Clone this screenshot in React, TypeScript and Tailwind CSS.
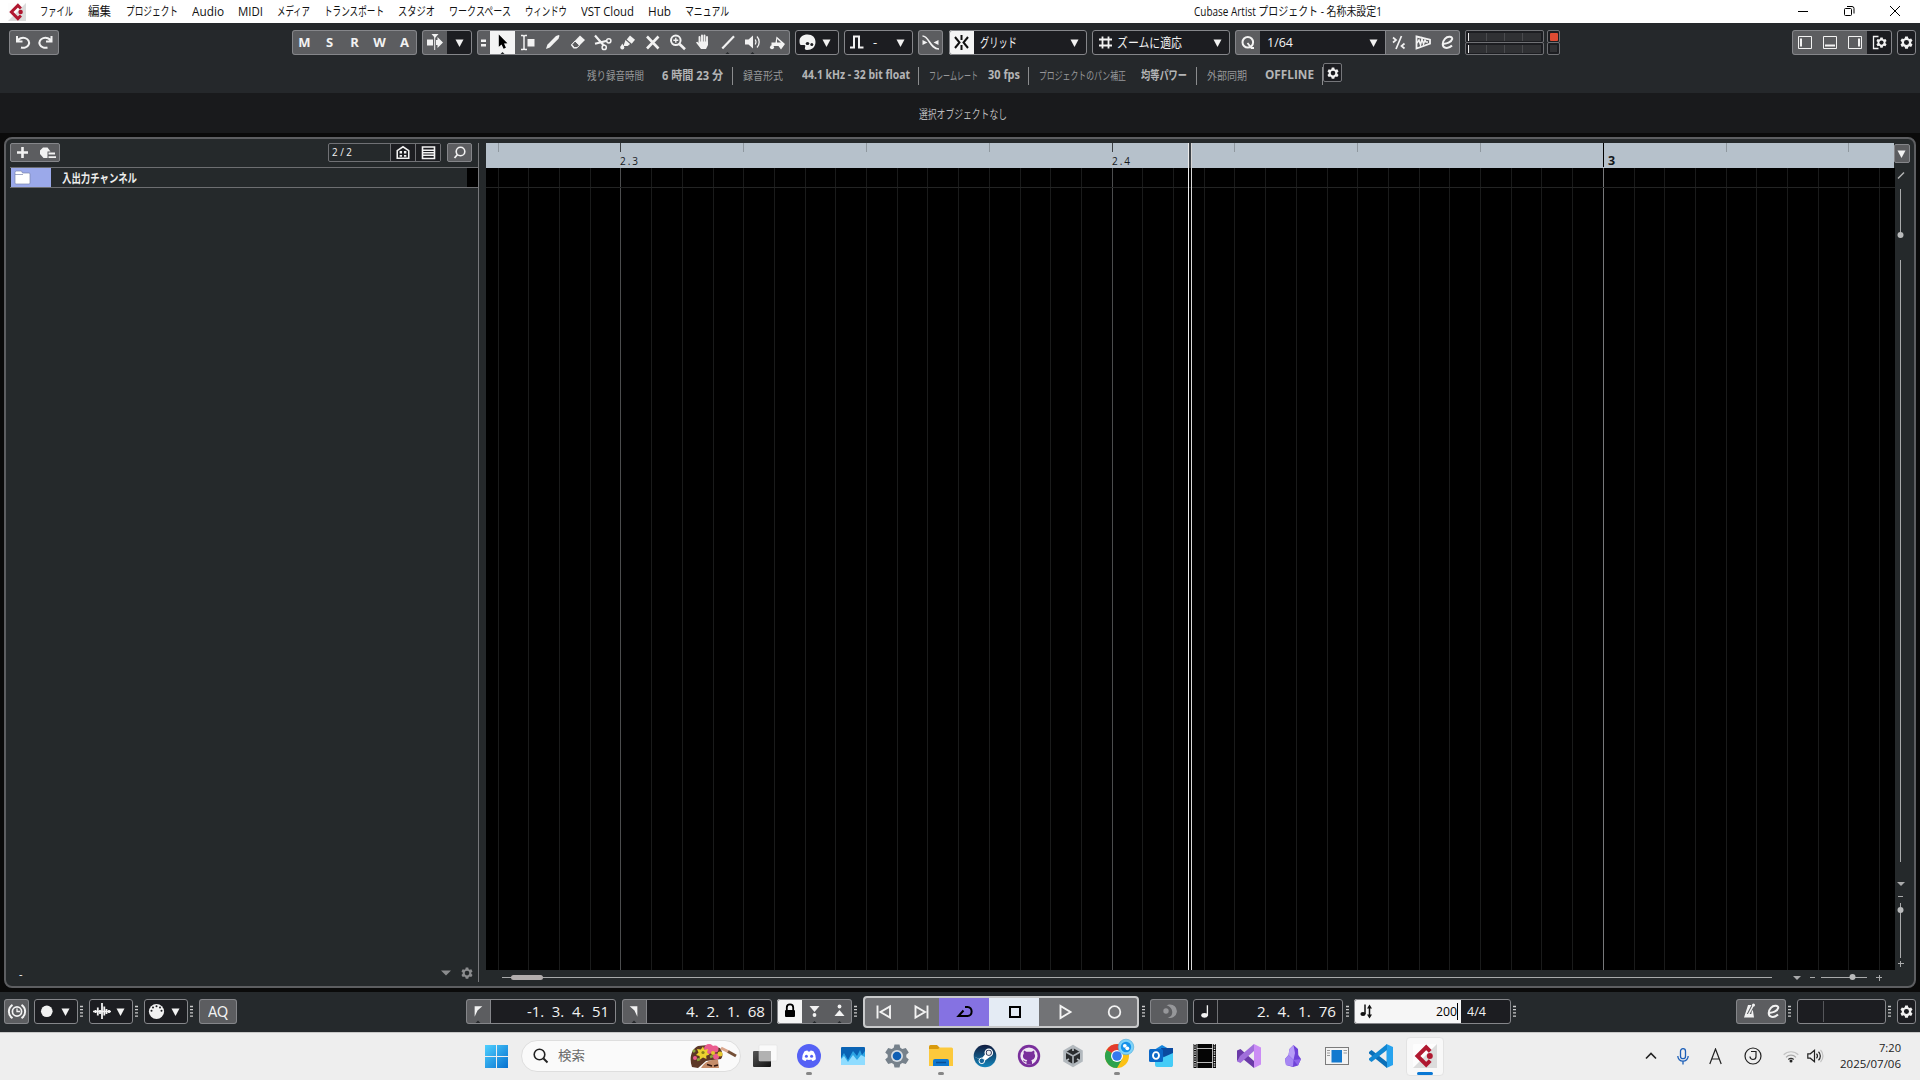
import { useLayoutEffect, useRef } from 'react';
import type { ReactNode } from 'react';

/** Text squeezed or stretched horizontally to the width of its box. */
function Fit({ children, className = '' }: { children: ReactNode; className?: string }) {
  const outer = useRef<HTMLSpanElement>(null);
  const inner = useRef<HTMLSpanElement>(null);
  useLayoutEffect(() => {
    if (outer.current && inner.current) {
      inner.current.style.transform = 'none';
      const natural = inner.current.getBoundingClientRect().width;
      inner.current.style.transform = `scaleX(${outer.current.clientWidth / natural})`;
    }
  }, []);
  return (
    <span ref={outer} className={`block shrink-0 whitespace-nowrap ${className}`}>
      <span ref={inner} className="inline-block origin-left">{children}</span>
    </span>
  );
}

function Icon({ children, w = 25, h = 25, className = '' }: { children: ReactNode; w?: number; h?: number; className?: string }) {
  return (
    <svg width={w} height={h} viewBox={`0 0 ${w} ${h}`} className={`block shrink-0 ${className}`} fill="none" stroke="none">
      {children}
    </svg>
  );
}

function Group({ children, className = '' }: { children?: ReactNode; className?: string }) {
  return (
    <div className={`flex h-[25px] shrink-0 items-center overflow-hidden rounded-[3px] outline outline-1 -outline-offset-1 outline-[#85868a] ${className}`}>
      {children}
    </div>
  );
}

const W = '#f2f2f2';
const GREY = 'bg-[#5c5d60]';
const DARK = 'bg-[#1c1d21]';

function Down({ className = '' }: { className?: string }) {
  return (
    <Icon w={9} h={8} className={className}>
      <path d="M0.5 0.5h8l-4 7.5z" fill={W} />
    </Icon>
  );
}

function Gear({ size, color, hole }: { size: number; color: string; hole: string }) {
  return (
    <svg width={size} height={size} viewBox="0 0 24 24" className="block shrink-0">
      <path d="M9.5 1h5l.8 3.300 2 1.200 3.300-1 2.500 4.300-2.500 2.300v2.400l2.500 2.300-2.500 4.300-3.300-1-2 1.200-.8 3.300h-5l-.8-3.300-2-1.200-3.300 1L.9 15.800l2.500-2.300v-2.400L.9 8.800l2.500-4.300 3.300 1 2-1.200z" fill={color} />
      <circle cx="12" cy="12.200" r="4.600" fill={hole} />
    </svg>
  );
}

function Dots() {
  return (
    <Icon w={4} h={13}>
      <path d="M0 1.500h3M0 4.700h3M0 7.900h3M0 11.100h3" stroke="#c9c9c9" strokeWidth="1.300" />
    </Icon>
  );
}

const menus: [string, string][] = [
  ['ファイル', 'w-[33px] mr-[15px]'],
  ['編集', 'w-[23px] mr-[15px]'],
  ['プロジェクト', 'w-[52px] mr-[14px]'],
  ['Audio', 'w-[32px] mr-[14px]'],
  ['MIDI', 'w-[25px] mr-[14px]'],
  ['メディア', 'w-[33px] mr-[14px]'],
  ['トランスポート', 'w-[60px] mr-[14px]'],
  ['スタジオ', 'w-[37px] mr-[14px]'],
  ['ワークスペース', 'w-[62px] mr-[14px]'],
  ['ウィンドウ', 'w-[42px] mr-[14px]'],
  ['VST Cloud', 'w-[53px] mr-[14px]'],
  ['Hub', 'w-[23px] mr-[14px]'],
  ['マニュアル', 'w-[44px]'],
];

function CubaseLogo({ size }: { size: number }) {
  return (
    <svg width={size} height={size} viewBox="0 0 24 24" className="block shrink-0">
      <rect width="24" height="24" rx="1" fill="#fdfdfd" />
      <path d="M24 0v24H0z" fill="#dcdcdc" />
      <path d="M17.200 7.300l-4-4L4.500 12l8.700 8.700 4-4" fill="none" stroke="#b01830" strokeWidth="4" />
      <circle cx="16.800" cy="12" r="3" fill="#b01830" />
    </svg>
  );
}

function MenuBar() {
  return (
    <header className="flex h-[23px] shrink-0 items-center bg-white text-[#111]">
      <div className="ml-[8px] mr-[14px] mt-[1px]"><CubaseLogo size={18} /></div>
      <nav className="flex text-[12px] leading-[20px]">
        {menus.map(([t, c]) => <Fit key={t} className={c}>{t}</Fit>)}
      </nav>
      <Fit className="ml-[465px] w-[188px] text-[12px] leading-[20px]">Cubase Artist プロジェクト - 名称未設定1</Fit>
      <div className="ml-auto mr-[19px] flex items-center gap-[34px] pb-[2px] text-black">
        <Icon w={12} h={12}><path d="M1 6.500h10" stroke="#000" /></Icon>
        <Icon w={12} h={12}><path d="M1.500 4.500a1 1 0 011-1h5a1 1 0 011 1v5a1 1 0 01-1 1h-5a1 1 0 01-1-1zM4 1.500h5a2 2 0 012 2v5" stroke="#000" /></Icon>
        <Icon w={12} h={12}><path d="M1 1l10 10M11 1L1 11" stroke="#000" /></Icon>
      </div>
    </header>
  );
}

const notch = <path d="M9.500 25l3-3 3 3z" fill="#25282b" />;

const tools: ReactNode[] = [
  <><path d="M8.800 4.500v12.300l2.800-2.300 2 4.200 2.300-1-1.900-4.200 3.400-.3z" fill="#000" />{notch}</>,
  <><path d="M6 5.500h2l1 1 1-1h2M6 19.500h2l1-1 1 1h2M9 6v13" stroke={W} strokeWidth="1.500" /><rect x="12.500" y="9" width="7" height="7.500" fill={W} /></>,
  <path d="M6 19l1.300-4.200L16 6l2.900-1 .6.800-1 3L9.800 17.600z" fill={W} />,
  <><path d="M15 5.500l5 4.500-8.500 8.500h-3L5.800 15z" fill={W} /><path d="M10 11l4.500 4.300-2.400 2.300h-3L7 14.500z" fill="#5c5d60" stroke={W} /></>,
  <><path d="M5 5.500l7 8M5 13.800l12-3M12 13.500l2 2" stroke={W} strokeWidth="2.200" /><circle cx="18.800" cy="10.800" r="2.100" stroke={W} strokeWidth="1.500" /><circle cx="14.200" cy="17.400" r="2.100" stroke={W} strokeWidth="1.500" /></>,
  <><path d="M15 5.500l5 4.200-3.300 4-5-4.200z" fill={W} /><path d="M10.500 10l4.600 4-2.400 1.900-4.300.2z" fill={W} /><circle cx="7.300" cy="17.500" r="2" fill={W} /><path d="M7.300 13.500l1.800 3.500H5.500z" fill={W} /></>,
  <path d="M7 6.500l11.500 12M18.500 6.500L7 18.500" stroke={W} strokeWidth="2.600" />,
  <><circle cx="10.800" cy="10.300" r="4.800" stroke={W} strokeWidth="2" /><path d="M14.500 14l5.500 5.200" stroke={W} strokeWidth="2.600" /><path d="M8.300 10.300h5M10.800 7.800v5" stroke={W} strokeWidth="1.400" /></>,
  <><path d="M9.500 13V7M12 12V5.500M14.500 12V5.500M17 12.500V7" stroke={W} strokeWidth="1.900" strokeLinecap="round" /><path d="M8.600 11.500H18V15l-2 4h-5l-5-6.600 1.300-.7 1.900 1.800z" fill={W} /></>,
  <><path d="M7.300 18.500L19 6.300" stroke={W} strokeWidth="2.200" />{notch}</>,
  <><path d="M5 9.500h3.500l4.500-4v13l-4.500-4H5z" fill={W} /><path d="M15.300 9.500a5 5 0 010 5M17 6.500a8 8 0 010 11" stroke={W} strokeWidth="1.300" />{notch}</>,
  <><path d="M11.500 6.500l8.500 7.500-4 5.500-2.500-3.500H6.500v-3.500h4z" fill={W} /><path d="M12 9l4 3.500h-4z" fill="#5c5d60" /><circle cx="7" cy="17.200" r="2" fill={W} /></>,
];

const EIcon = <path d="M7.500 13.500c4 .7 9-1.600 9.700-4.500.6-2.600-4.500-3.300-7.300-.2-3 3.300-3 8.200.6 9 2.400.5 4.800-.6 6.500-2.300" stroke={W} strokeWidth="2" />;

function Toolbar() {
  return (
    <div className="flex h-[39px] shrink-0 items-start pt-[7px] text-[#f2f2f2]">
      <Group className={`ml-[9px] w-[50px] ${GREY}`}>
        <Icon><path d="M8 6v5.500h5.500M8.500 11A6 5 0 1112 17.500" stroke={W} strokeWidth="2" /></Icon>
        <Icon><path d="M17.500 6v5.500H12M17 11A6 5 0 1013.500 17.500" stroke={W} strokeWidth="2" /></Icon>
      </Group>
      <Group className={`ml-[233px] w-[125px] font-['Open_Sans'] text-[13px] font-bold ${GREY}`}>
        {['M', 'S', 'R', 'W', 'A'].map((c) => <span key={c} className="w-[25px] text-center">{c}</span>)}
      </Group>
      <Group className={`ml-[5px] w-[50px] ${DARK}`}>
        <Icon className={GREY}>
          <path d="M5 9.500h6v6H5zM14 10h1.500V7l5.500 5.500-5.500 5.500v-3H14zM9.500 4h7l-3.500 4z" fill={W} />
          <path d="M12.700 4v16" stroke={W} />
        </Icon>
        <Down className="ml-[8px]" />
      </Group>
      <Group className={`ml-[5px] w-[313px] ${GREY}`}>
        <Icon w={13}><path d="M4 9.500h5v2.500H4zM4 14h5v2.500H4z" fill={W} /></Icon>
        {tools.map((t, i) => <Icon key={i} className={i === 0 ? 'bg-[#f4f4f4]' : ''}>{t}</Icon>)}
      </Group>
      <Group className={`ml-[5px] w-[44px] ${DARK}`}>
        <Icon>
          <path d="M4.500 11C4.500 7 8 4.500 12.500 4.500c5 0 8 3 8 7.500 0 5-3.500 8-8.500 8-2 0-2.500-1-2-2.500s.5-2.500-.8-2.500H6c-1 0-1.500-1.500-1.500-4z" fill={W} />
          <ellipse cx="12.500" cy="13.500" rx="1.800" ry="1.600" fill="#1c1d21" />
          <ellipse cx="16.800" cy="14.500" rx="1.500" ry="1.500" fill="#1c1d21" />
        </Icon>
        <Down className="ml-[2px]" />
      </Group>
      <Group className={`ml-[5px] w-[69px] text-[13px] ${DARK}`}>
        <Icon><path d="M6 17.500h4v-11h5v11h4.500" stroke={W} strokeWidth="2" /></Icon>
        <span className="ml-[4px]">-</span>
        <Down className="ml-auto mr-[8px]" />
      </Group>
      <Group className={`ml-[5px] w-[25px] ${GREY}`}>
        <Icon><path d="M4.500 6c7 0 7 13 16.500 13" stroke={W} strokeWidth="1.600" /><path d="M4.500 10v5l5-2.500zM20.500 10v5l-5-2.500z" fill={W} /></Icon>
      </Group>
      <Group className={`ml-[6px] w-[138px] ${DARK}`}>
        <Icon className="bg-[#f4f4f4]">
          <path d="M12.500 5v5M12.500 15v5M6 7l4.500 5.500L6 18M19 7l-4.500 5.500L19 18" stroke="#111" strokeWidth="2" />
        </Icon>
        <Fit className="ml-[6px] w-[37px] text-[13px]">グリッド</Fit>
        <Down className="ml-auto mr-[8px]" />
      </Group>
      <Group className={`ml-[5px] w-[138px] ${DARK}`}>
        <Icon><path d="M7 9.500h13M7 15.500h13M10.500 6.500v12M16.500 6.500v12" stroke={W} strokeWidth="1.800" /></Icon>
        <Fit className="w-[65px] text-[13px]">ズームに適応</Fit>
        <Down className="ml-auto mr-[8px]" />
      </Group>
      <Group className={`ml-[5px] w-[225px] ${DARK}`}>
        <Icon className={GREY}><circle cx="12.800" cy="12.300" r="5.300" stroke={W} strokeWidth="2" /><path d="M12.500 13l4 5h2.500" stroke={W} strokeWidth="1.800" /></Icon>
        <Fit className="ml-[7px] w-[26px] text-[13px]">1/64</Fit>
        <Down className="ml-auto mr-[7px]" />
        <div className={`flex border-l border-[#85868a] ${GREY}`}>
          <Icon w={24}><path d="M15.500 6L10 19M7 7.500l3 2.500-3 2.500M18.500 13.500l-3 2.500 3 2.500" stroke={W} strokeWidth="1.700" /></Icon>
          <Icon><path d="M6.500 6.500l13.500 3.200v4L6.500 18.500z" fill="#5c5d60" stroke={W} strokeWidth="1.800" /><path d="M7 13l2-3 1.500 5 1.500-6 1.500 5 1.500-4 1 2h2" stroke={W} strokeWidth="1.500" /></Icon>
          <Icon>{EIcon}</Icon>
        </div>
      </Group>
      <div className="ml-[5px] flex h-[25px] w-[79px] flex-col">
        {[0, 1].map((i) => (
          <div key={i} className="flex h-[13px] items-center rounded-[2px] border border-[#707175] bg-[#1c1d21] px-[2px] not-first:-mt-[1px]">
            <div className="h-[8px] w-[1px] bg-[#eee]" />
            <div className="grid h-[8px] grow grid-cols-4 divide-x divide-[#4a4b4e] bg-[#303134]"><i /><i /><i /><i /></div>
          </div>
        ))}
      </div>
      <div className="ml-[3px] flex h-[25px] w-[13px] flex-col">
        <div className="flex h-[13px] items-center justify-center rounded-[2px] border border-[#707175] bg-[#1c1d21]"><div className="size-[8px] rounded-[1px] bg-[#de4b33]" /></div>
        <div className="-mt-[1px] flex h-[13px] items-center justify-center rounded-[2px] border border-[#707175] bg-[#1c1d21]"><div className="size-[7px] bg-[#303134]" /></div>
      </div>
      <Group className={`ml-auto w-[100px] ${GREY}`}>
        <Icon><path d="M6.500 6.500h13v12h-13z" stroke={W} /><path d="M8 8.500h2v8H8z" fill={W} /></Icon>
        <Icon><path d="M6.500 6.500h13v12h-13z" stroke={W} /><path d="M8 14.500h10v2H8z" fill={W} /></Icon>
        <Icon><path d="M6.500 6.500h13v12h-13z" stroke={W} /><path d="M16 8.500h2v8h-2z" fill={W} /></Icon>
        <div className={`flex h-[25px] w-[25px] items-center ${DARK}`}>
          <Icon w={8} className="ml-[4px]"><path d="M7.500 6.500h-5v12h5" stroke={W} strokeWidth="1.300" /></Icon>
          <div className="-ml-[3px]"><Gear size={11} color={W} hole="#1c1d21" /></div>
        </div>
      </Group>
      <Group className={`ml-[5px] mr-[4px] w-[19px] justify-center ${DARK}`}><Gear size={13} color={W} hole="#1c1d21" /></Group>
    </div>
  );
}

function Sep({ className = '' }: { className?: string }) {
  return <div className={`h-[18px] w-[1px] shrink-0 bg-[#8b8c8e] ${className}`} />;
}

function InfoLine() {
  const label = 'text-[11px] text-[#97989a]';
  const value = 'text-[12px] font-bold text-[#b4b5b6]';
  return (
    <div className="flex h-[31px] shrink-0 items-center pb-[3px] pl-[587px] leading-[18px]">
      <Fit className={`w-[57px] ${label}`}>残り録音時間</Fit>
      <Fit className={`ml-[18px] w-[61px] ${value}`}>6 時間 23 分</Fit>
      <Sep className="ml-[9px]" />
      <Fit className={`ml-[10px] w-[40px] ${label}`}>録音形式</Fit>
      <Fit className={`ml-[19px] w-[108px] pb-[2px] ${value}`}>44.1 kHz - 32 bit float</Fit>
      <Sep className="ml-[8px]" />
      <Fit className={`ml-[10px] w-[49px] ${label}`}>フレームレート</Fit>
      <Fit className={`ml-[10px] w-[32px] pb-[2px] ${value}`}>30 fps</Fit>
      <Sep className="ml-[8px]" />
      <Fit className={`ml-[10px] w-[87px] ${label}`}>プロジェクトのパン補正</Fit>
      <Fit className={`ml-[15px] w-[46px] ${value}`}>均等パワー</Fit>
      <Sep className="ml-[9px]" />
      <Fit className={`ml-[10px] w-[40px] ${label}`}>外部同期</Fit>
      <Fit className={`ml-[18px] w-[49px] pb-[3px] ${value}`}>OFFLINE</Fit>
      <Sep className="ml-[8px]" />
      <div className="mb-[7px] flex h-[19px] w-[19px] items-center justify-center rounded-[2px] border border-[#75767a] bg-[#1c1d21]"><Gear size={12} color={W} hole="#1c1d21" /></div>
    </div>
  );
}

function TrackList() {
  return (
    <section className="mt-[4px] flex h-[839px] w-[473px] shrink-0 flex-col border-r border-[#77787b]">
      <div className="flex h-[24px] shrink-0 items-start pl-[4px]">
        <div className={`flex h-[19px] w-[50px] items-center rounded-[2px] border border-[#85868a] ${GREY}`}>
          <Icon w={24} h={17}><path d="M6 8.500h11M11.500 3v11" stroke={W} strokeWidth="2.600" /></Icon>
          <Icon w={24} h={17}><path d="M8 3.500h4.500l3 4h-3v6.500H8.500L5 10V6.500z" fill={W} /><path d="M13.500 9.500H20M13.500 13.200H21" stroke={W} strokeWidth="1.800" /></Icon>
        </div>
        <div className="ml-auto flex h-[19px] w-[113px] items-center rounded-[2px] border border-[#707175] text-[10px] text-[#f2f2f2]">
          <Fit className="ml-[3px] w-[20px]">2 / 2</Fit>
          <div className={`ml-auto flex divide-x divide-[#707175] border-l border-[#707175] ${DARK}`}>
            <Icon w={25} h={17}><path d="M6.500 14.500v-8l6-4 6 4v8z" stroke={W} strokeWidth="1.600" /><path d="M9 7h2.500v2.500H9zM13.500 7H16v2.500h-2.500zM9 11h2.500v2H9zM13.500 11H16v2h-2.500z" fill={W} /></Icon>
            <Icon w={24} h={17}><path d="M6.500 3h12v11.500h-12z" stroke={W} strokeWidth="1.600" /><path d="M7 6.300h11M7 8.800h11M7 11.300h11" stroke={W} strokeWidth="1.500" /></Icon>
          </div>
        </div>
        <div className={`ml-[6px] mr-[6px] flex h-[19px] w-[25px] items-center justify-center rounded-[2px] border border-[#85868a] ${GREY}`}>
          <Icon w={15} h={15}><circle cx="8.500" cy="6.500" r="4.300" stroke={W} strokeWidth="1.600" /><path d="M5.500 9.500L2.500 13" stroke={W} strokeWidth="1.800" /></Icon>
        </div>
      </div>
      <div className="ml-[4px] flex h-[21px] shrink-0 items-center border-y border-[#6d6e71]">
        <div className="ml-[1px] flex h-[19px] w-[40px] items-center bg-[#9ba9ea] pl-[3px]">
          <Icon w={17} h={15}><path d="M1 2.500q0-1.500 1.500-1.500h5l1 2h6.500q1 0 1 1v9q0 1-1 1H2q-1 0-1-1z" fill="#fff" stroke="#7a84ae" strokeWidth=".7" /><path d="M1 4.500h8" stroke="#7a84ae" strokeWidth=".7" /></Icon>
        </div>
        <Fit className="ml-[11px] w-[75px] pt-[2px] text-[12px] font-bold leading-[17px] text-[#ededed]">入出力チャンネル</Fit>
        <div className="ml-auto h-[19px] w-[11px] bg-black" />
      </div>
      <div className="grow" />
      <div className="flex h-[18px] items-center pl-[13px] text-[11px] text-white">
        <span className="pt-[2px]">-</span>
        <Icon w={10} h={6} className="ml-auto"><path d="M0 .5h10l-5 5z" fill="#8b8c8e" /></Icon>
        <div className="ml-[10px] mr-[5px]"><Gear size={12} color="#8b8c8e" hole="#25292b" /></div>
      </div>
    </section>
  );
}

const STEP = 30.7;
const gridLines = Array.from({ length: 46 }, (_, i) => i - 4)
  .map((n) => ({ n, x: 134 + Math.ceil(n * STEP) }))
  .filter((g) => g.x > 0 && g.x < 1408);

function Arrange() {
  return (
    <section className="ml-[7px] mt-[4px] w-[1409px] shrink-0">
      <svg width="1409" height="827" viewBox="0 0 1409 827" className="block" shapeRendering="crispEdges">
        <rect y="25" width="1409" height="802" fill="#000" />
        <rect width="1408" height="25" fill="#b6c1cb" />
        {gridLines.map(({ n, x }) => (
          <g key={n}>
            <rect x={x} y="25" width="1" height="802" fill={n === 32 ? '#77787a' : n % 16 === 0 ? '#4c4d4e' : '#1a1b1b'} />
            {n % 4 === 0 && n !== 32 && <rect x={x} width="1" height="9" fill={n % 16 === 0 ? '#3c4043' : '#8f989f'} />}
          </g>
        ))}
        <rect y="44" width="1409" height="1" fill="#232424" />
        <rect x="1117" width="1" height="24" fill="#000" />
        <rect x="703" width="2" height="25" fill="#3c4146" />
        <rect x="702" width="1" height="827" fill="#eee" />
        <rect x="705" width="1" height="827" fill="#d8d8d8" />
        <g fill="#15181b" fontFamily="Open Sans, sans-serif" shapeRendering="auto">
          <text x="134" y="21.500" fontSize="10" textLength="18">2.3</text>
          <text x="626" y="21.500" fontSize="10" textLength="18">2.4</text>
          <text x="1122" y="21.500" fontSize="12.500" fontWeight="bold">3</text>
        </g>
      </svg>
      <svg width="1409" height="15" viewBox="0 0 1409 15" className="block">
        <g stroke="#a9aaab" shapeRendering="crispEdges">
          <path d="M16 7.500h1270M1324 7.500h5M1335 7.500h46M1390 7.500h6M1393.500 5v6" />
        </g>
        <rect x="25" y="5" width="32" height="5" rx="2.500" fill="#b1acac" />
        <path d="M1307 6h8l-4 4z" fill="#a9aaab" />
        <circle cx="1366.500" cy="7" r="3" fill="#b9babb" />
      </svg>
    </section>
  );
}

function RightStrip() {
  return (
    <aside className="mt-[5px] flex w-[19px] flex-col">
      <div className={`-ml-[1px] flex h-[19px] w-[16px] items-center justify-center rounded-[2px] border border-[#85868a] ${GREY}`}><Down className="-ml-[1px]" /></div>
      <svg width="18" height="811" viewBox="0 0 18 811" className="block">
        <path d="M3 15.500l6-6" stroke="#b5b6b7" strokeWidth="1.400" />
        <path d="M5.500 26v45M5.500 97v602M5.500 740v55M3 733.500h5M3 800.500h6M5.500 798v6" stroke="#a9aaab" shapeRendering="crispEdges" />
        <circle cx="5.500" cy="72" r="3" fill="#b9babb" />
        <circle cx="5.500" cy="747" r="3" fill="#b9babb" />
        <path d="M2 719h8l-4 4z" fill="#a9aaab" />
      </svg>
    </aside>
  );
}

function Transport() {
  return (
    <div className="flex h-[40px] shrink-0 items-center bg-[#25292c] pb-[1px] text-[14px] text-[#f2f2f2]">
      <Group className={`ml-[4px] w-[25px] ${GREY}`}>
        <Icon><circle cx="13" cy="12.500" r="4.600" stroke={W} strokeWidth="1.700" /><path d="M13 9.500v3h3" stroke={W} strokeWidth="1.300" /><path d="M8.500 5.800a8 8 0 000 13.400M17.500 5.800a8 8 0 010 13.400" stroke={W} strokeWidth="2" /></Icon>
      </Group>
      <Group className={`ml-[5px] mr-[2px] w-[44px] ${DARK}`}><Icon><circle cx="12.800" cy="12.300" r="5.800" fill={W} /></Icon><Down className="ml-[2px]" /></Group>
      <Dots />
      <Group className={`ml-[5px] mr-[2px] w-[44px] ${DARK}`}><Icon><path d="M4 12.500h18" stroke={W} strokeWidth="1.600" /><path d="M6.500 11v3M8.800 8.500v8M11 11v4M13 4v16M15.300 7.500v9M17.500 10v5M20 11v3" stroke={W} strokeWidth="1.800" /></Icon><Down className="ml-[2px]" /></Group>
      <Dots />
      <Group className={`ml-[5px] mr-[2px] w-[44px] ${DARK}`}>
        <Icon><circle cx="12.500" cy="12.500" r="7.600" fill={W} /><g fill="#1c1d21"><circle cx="7.500" cy="11.700" r="1" /><circle cx="9" cy="8.500" r="1" /><circle cx="12.500" cy="7.200" r="1" /><circle cx="16" cy="8.500" r="1" /><circle cx="17.500" cy="11.700" r="1" /></g></Icon>
        <Down className="ml-[2px]" />
      </Group>
      <Dots />
      <Group className={`ml-[5px] w-[38px] justify-center ${GREY}`}><Fit className="w-[20px] font-['Lato'] text-[15px]">AQ</Fit></Group>

      <Group className={`ml-[229px] w-[150px] ${DARK}`}>
        <Icon className={`border-r border-[#85868a] ${GREY}`}><path d="M9 7h8l-5 4.500-3 6.500z" fill={W} />{notch}</Icon>
        <Fit className="ml-auto mr-[7px] w-[82px] whitespace-pre">-1.  3.  4.  51</Fit>
      </Group>
      <Group className={`ml-[6px] w-[150px] ${DARK}`}>
        <Icon className={`border-r border-[#85868a] ${GREY}`}><path d="M8 7h8v11l-3-6.500z" fill={W} />{notch}</Icon>
        <Fit className="ml-auto mr-[7px] w-[79px] whitespace-pre">4.  2.  1.  68</Fit>
      </Group>
      <Group className={`ml-[5px] mr-[2px] w-[75px] ${GREY}`}>
        <Icon className="bg-[#f4f4f4]"><rect x="8" y="11" width="10" height="7" rx="1" fill="#000" /><path d="M9.800 11V8.500a3.200 3.200 0 016.400 0V11" stroke="#000" strokeWidth="1.800" /></Icon>
        <Icon><path d="M7.500 7h10l-5 6z" fill={W} /><circle cx="12.500" cy="16" r="1.900" fill={W} />{notch}</Icon>
        <Icon><path d="M7.500 17h10l-5-6z" fill={W} /><circle cx="12.500" cy="7.500" r="1.900" fill={W} />{notch}</Icon>
      </Group>
      <Dots />
      <div className="ml-[5px] mr-[3px] mt-[1px] flex h-[32px] w-[276px] shrink-0 items-stretch overflow-hidden rounded-[4px] border-2 border-[#c9cacb] bg-[#727376]">
        <Icon w={37} h={28}><path d="M12.500 7.500v13M25 8.500v11l-9.500-5.500z" stroke={W} strokeWidth="1.900" /></Icon>
        <Icon w={37} h={28}><path d="M25.500 7.500v13M13.500 8.500v11l9.500-5.500z" stroke={W} strokeWidth="1.900" /></Icon>
        <Icon w={50} h={28} className="bg-[#8572e2]"><path d="M26 9h2.500c5.500 0 5.500 9 0 9H19.500l5-5.500" stroke="#000" strokeWidth="2" /></Icon>
        <Icon w={50} h={28} className="bg-[#e4ebf4]"><path d="M21 9h10v10H21z" stroke="#000" strokeWidth="2" /></Icon>
        <Icon w={50} h={28}><path d="M21.500 8v12l10-6z" stroke={W} strokeWidth="1.900" /></Icon>
        <Icon w={48} h={28}><circle cx="25.500" cy="14" r="5.800" stroke={W} strokeWidth="1.800" /></Icon>
      </div>
      <Dots />
      <Group className={`ml-[4px] w-[38px] justify-center ${GREY}`}><Icon><circle cx="9" cy="12" r="2.700" fill="#96979a" /><path d="M12 5.500a6.800 6.800 0 11-1.500 13c6 0 7-10-1-12.300z" fill="#96979a" /></Icon></Group>
      <Group className={`ml-[5px] mr-[3px] w-[150px] ${DARK}`}>
        <Icon className="border-r border-[#707175]"><ellipse cx="12" cy="16.500" rx="3.400" ry="2.400" fill={W} /><path d="M15 17V6" stroke={W} strokeWidth="1.400" /></Icon>
        <Fit className="ml-auto mr-[7px] w-[79px] whitespace-pre">2.  4.  1.  76</Fit>
      </Group>
      <Dots />
      <Group className={`ml-[4px] mr-[2px] w-[157px] ${DARK}`}>
        <div className="flex h-[25px] w-[107px] items-center bg-[#f6f6f6] text-black">
          <Icon><ellipse cx="9" cy="15" rx="2.600" ry="1.900" fill="#111" /><path d="M11 15V5.500M15.500 8v9" stroke="#111" strokeWidth="1.500" /><path d="M13 9.500h5l-2.500-4zM13 15.500h5l-2.500 4z" fill="#111" /></Icon>
          <Fit className="ml-auto w-[21px] text-[13px]">200</Fit>
          <div className="mr-[3px] h-[17px] w-[1px] bg-black" />
        </div>
        <Fit className="ml-[6px] w-[19px] text-[12px]">4/4</Fit>
      </Group>
      <Dots />
      <Group className={`ml-auto mr-[2px] w-[50px] ${GREY}`}>
        <Icon><path d="M12 6h3.500L10.800 15h4.500l.7-4 1 1 1 6.500H8z" fill={W} /><path d="M12.500 15.500L17.500 6" stroke={W} strokeWidth="1.600" /><circle cx="17.500" cy="6" r="1.500" fill={W} /></Icon>
        <Icon>{EIcon}</Icon>
      </Group>
      <Dots />
      <Group className={`ml-[5px] mr-[2px] w-[89px] ${DARK}`}><div className="ml-[26px] h-[21px] w-[1px] bg-[#55565a]" /></Group>
      <Dots />
      <Group className={`ml-[5px] mr-[4px] w-[19px] justify-center ${DARK}`}><Gear size={13} color={W} hole="#1c1d21" /></Group>
    </div>
  );
}

const apps: { name: string; dot?: boolean; art: ReactNode }[] = [
  {
    name: 'taskview',
    art: <><defs><linearGradient id="tv" x1="0" y1="0" x2="1" y2="1"><stop offset="0" stopColor="#555" /><stop offset="1" stopColor="#111" /></linearGradient></defs><rect x="0" y="7" width="18" height="16" rx="1" fill="url(#tv)" /><rect x="6" y="1" width="18" height="16" rx="1" fill="#fafafa" stroke="#dcdcdc" strokeWidth=".5" /><path d="M6 7h12v10H7q-1 0-1-1z" fill="#b2b2b2" /></>,
  },
  {
    name: 'discord',
    dot: true,
    art: <><circle cx="12" cy="12" r="12" fill="#5561f5" /><path d="M7.300 7.600q1.600-.9 3.200-1.100l.5 1h2l.5-1q1.600.2 3.200 1.100 2.400 3.600 2.200 7.600-1.700 1.500-3.600 1.800l-.9-1.400q-2.400.6-4.800 0L8.700 17q-1.900-.3-3.600-1.800-.2-4 2.200-7.600z" fill="#fff" /><circle cx="9.400" cy="12.300" r="1.500" fill="#5561f5" /><circle cx="14.600" cy="12.300" r="1.500" fill="#5561f5" /></>,
  },
  {
    name: 'monitor',
    art: <><rect y="3" width="24" height="18" rx="1" fill="#0a63b4" /><path d="M0 14l3-5 4 7 5-9 4 5 3-6 2 5 3-4v13H0z" fill="#2da5e4" /><path d="M0 15l3-3 4 6 5-7 4 5 4-5 4 2v8H0z" fill="#8fdcff" /></>,
  },
  {
    name: 'settings',
    art: <><path d="M9.500.5h5l.8 3.300 2 1.200 3.500-1 3 4.500-2.500 2.300v2.400l2.500 2.300-3 4.500-3.500-1-2 1.200-.8 3.300h-5l-.8-3.300-2-1.200-3.500 1-3-4.500 2.500-2.300v-2.400L.2 8.500l3-4.500 3.500 1 2-1.200z" fill="#76818b" /><circle cx="12" cy="12" r="6" fill="#d7dde2" /><circle cx="12" cy="12" r="4.300" fill="#0f5fb4" /></>,
  },
  {
    name: 'files',
    dot: true,
    art: <><path d="M0 2.500Q0 1 1.500 1H8l2.500 2.500V6H0z" fill="#d99a0c" /><path d="M0 5h9l2-1.500h11.500q1.500 0 1.500 1.500v17H0z" fill="#fcc93c" /><path d="M4 22v-5q0-2 2-2h12q2 0 2 2v5z" fill="#0f78d0" /><path d="M7 18.500h10" stroke="#0a4f96" strokeWidth="1.500" /></>,
  },
  {
    name: 'steam',
    art: <><defs><linearGradient id="st" x1="0" y1="0" x2="0" y2="1"><stop offset="0" stopColor="#111b3d" /><stop offset="1" stopColor="#1386bd" /></linearGradient></defs><circle cx="12" cy="12" r="11.300" fill="url(#st)" /><path d="M.8 12.500l7 3 4.500-5.500 4.500 3-6 4.500z" fill="#fff" /><circle cx="15.800" cy="8.800" r="4.300" fill="#fff" /><circle cx="15.800" cy="8.800" r="3" fill="#16224a" /><circle cx="15.800" cy="8.800" r="2.200" fill="#eee" /><circle cx="8.800" cy="16.800" r="2.800" fill="#17659a" stroke="#fff" strokeWidth="1" /></>,
  },
  {
    name: 'github',
    art: <><circle cx="12" cy="12" r="11.200" fill="#7a2f9c" /><circle cx="12" cy="12" r="8.600" fill="#f0e8f4" /><path d="M7 6.500l2.500 1.300h5L17 6.500q.8 1.300.3 3Q18.500 11 18 13q-.8 2.800-3.700 3.200.7.800.7 2v2H9.500v-2q-2.800.6-3.700-2 1.500 0 2.200 1 .8.700 1.700.2.100-.8.600-1.300Q6.700 15.700 6 13q-.4-2 .8-3.500-.5-1.700.2-3z" fill="#7a2f9c" /></>,
  },
  {
    name: 'unity',
    art: <><path d="M12 .8l9.800 5.600v11.200L12 23.200 2.200 17.600V6.400z" fill="#b3b9be" /><path d="M12 4l7 4v8l-7 4-7-4V8z" fill="#2a2c2e" /><path d="M12 12v9M12 12l7.500-4.300M12 12L4.500 7.700" stroke="#a9afb5" strokeWidth="1.700" /><path d="M12 3v4M4.500 17l3.500-2M19.500 17L16 15" stroke="#b3b9be" strokeWidth="1.700" /></>,
  },
  {
    name: 'chrome',
    dot: true,
    art: <><circle cx="12" cy="12" r="12" fill="#fbc116" /><path d="M12 12L1.600 6A12 12 0 0122.400 6z" fill="#e33b2e" /><path d="M12 12L1.600 6A12 12 0 0012 24l5.200-9z" fill="#2ca24c" /><circle cx="12" cy="12" r="6" fill="#fff" /><circle cx="12" cy="12" r="4.800" fill="#3579f0" /><circle cx="21" cy="3" r="7.800" fill="#7fd3f8" stroke="#4ba9d8" strokeWidth=".6" /><circle cx="21" cy="3" r="5.200" fill="#1592ea" /><circle cx="19.800" cy="1.800" r="1.900" fill="#fff" /><circle cx="22.300" cy="4.300" r="1.900" fill="#fff" /></>,
  },
  {
    name: 'outlook',
    art: <><path d="M5 6l8-5 10.500 6v14q0 2-2 2H8z" fill="#1685dc" /><path d="M12 4h12v6l-9 5z" fill="#0a4aa0" /><path d="M6 17l18-8v12q0 2-2 2H8q-2 0-2-2z" fill="#45ccf7" /><rect y="5" width="14" height="13" rx="1.500" fill="#0b67c7" /><ellipse cx="7" cy="11.500" rx="3" ry="3.400" fill="none" stroke="#fff" strokeWidth="1.900" /></>,
  },
  {
    name: 'film',
    art: <><rect x="0.500" width="22.500" height="24" fill="#050505" /><path d="M2 0v24M21.500 0v24" stroke="#e8e8e8" strokeWidth="1.600" strokeDasharray="1.200 1.200" /><path d="M4 0v24M19.500 0v24M4 4.500h15.500M4 18.500h15.500" stroke="#e8e8e8" strokeWidth=".8" /></>,
  },
  {
    name: 'visual-studio',
    art: <><path d="M17 0l7 3.500v17L17 24z" fill="#cb8cf5" /><path d="M0 6.500L3.500 5 17 17v7L3 12.500 3 18 0 16.500z" fill="#6b3aa8" /><path d="M0 17.500L3.500 19 17 7V0L3 12z" fill="#a06fdb" /></>,
  },
  {
    name: 'obsidian',
    art: <><path d="M12.500 1l4.500 4 .3 6 2.700 4-3 6.500-5 1.500-7-2-1-6L7.500 11 8.500 5z" fill="#6f42d8" /><path d="M12.500 1l-4 4-1 6 5 5 1.500-7z" fill="#b79cf7" /><path d="M7.500 11L4 15l1 6 7 1.500.5-6.500z" fill="#a686f3" /><path d="M12.500 16l7.500-1-3 6.500z" fill="#8d62ea" /></>,
  },
  {
    name: 'window',
    art: <><rect x=".5" y="3.500" width="23" height="17" fill="#f3f3f3" stroke="#7b7b7b" /><rect x="6.500" y="6" width="10.500" height="12.500" fill="#1279cf" /><path d="M2 6.500h3M2 9h3M2 11.500h3M18.500 6.500h3.500M18.500 9h3.500" stroke="#9b9b9b" /></>,
  },
  {
    name: 'vscode',
    art: <><path d="M17.500 0L24 3v18l-6.500 3z" fill="#27a3ee" /><path d="M0 8l2.500-2L18 18v6L0 9.500z" fill="#0a6fb8" /><path d="M0 16l2.500 2L18 6V0L0 14.500z" fill="#1287d2" /></>,
  },
];

function Taskbar() {
  return (
    <footer className="flex h-[48px] shrink-0 items-center border-t border-[#c8c8c8] bg-[#eeeeee] pb-[1px] text-[#222]">
      <svg width="23" height="23" viewBox="0 0 23 23" className="ml-[485px] block shrink-0">
        <defs><linearGradient id="win" x1="0" y1="0" x2="1" y2="1"><stop offset="0" stopColor="#4fd0ff" /><stop offset="1" stopColor="#0670cf" /></linearGradient></defs>
        <path d="M0 0h11v11H0zM12 0h11v11H12zM0 12h11v11H0zM12 12h11v11H12z" fill="url(#win)" />
      </svg>
      <div className="ml-[13px] flex h-[32px] w-[220px] shrink-0 items-center rounded-full border border-[#dedede] bg-[#fafafa]">
        <Icon w={16} h={16} className="ml-[11px]"><circle cx="6.500" cy="6.500" r="5.300" stroke="#222" strokeWidth="1.600" /><path d="M10.500 10.500l4 4" stroke="#222" strokeWidth="1.900" /></Icon>
        <Fit className="ml-[9px] w-[27px] text-[13px] text-[#6a6a6a]">検索</Fit>
        <Icon w={48} h={26} className="ml-auto mr-[2px]">
          <path d="M2 24C-1 16 1 6 8 3l10-1 12 3c3 4 3 9 1 11L16 18 8 25z" fill="#5c3726" />
          <path d="M11 25c4-7 11-9 17-8l1 8z" fill="#c58c69" />
          <path d="M17 21.500l5 1.500M24 23l4-1" stroke="#31150d" strokeWidth="1.500" />
          <g fill="#ea5c8e"><circle cx="19" cy="6" r="5" /><circle cx="26" cy="13.500" r="3" /><circle cx="5" cy="15" r="2" /><circle cx="25" cy="6" r="3.500" /></g>
          <path d="M13 3.500l1.500 3.500 3.500-1-1 3.500 2.500 2-3.300 1.300.3 3.200-3.500-1.500-3 2-.5-3.500-3.500-1 2.500-2.500L7 6l3.800.5z" fill="#ecd22f" />
          <g fill="#e6c82d"><circle cx="23" cy="10" r="2" /><circle cx="30" cy="11" r="2.500" /></g>
          <circle cx="13" cy="9.500" r="1.600" fill="#8c8418" />
          <path d="M3 9l2-2M7 17l3-1M20 14l3-1" stroke="#8aa53a" strokeWidth="2.500" />
          <path d="M31 5l8 4" stroke="#d9a58a" strokeWidth="3" /><path d="M38 8.500l8 4.500" stroke="#745038" strokeWidth="3" />
        </Icon>
      </div>
      <div className="ml-[12px] flex gap-[20px]">
        {apps.map((a) => (
          <div key={a.name} className="flex h-[46px] w-[24px] flex-col items-center pt-[11px]">
            <svg width="24" height="24" viewBox="0 0 24 24" className="block shrink-0 overflow-visible">{a.art}</svg>
            {a.dot && <div className="mt-[4px] h-[3px] w-[6px] rounded-full bg-[#868686]" />}
          </div>
        ))}
      </div>
      <div className="ml-[13px] flex h-[39px] w-[38px] shrink-0 flex-col items-center rounded-[4px] border border-[#e3e3e3] bg-[#f8f8f8] pt-[6px]">
        <CubaseLogo size={24} />
        <div className="mt-[4px] h-[3px] w-[16px] shrink-0 rounded-full bg-[#0a78d4]" />
      </div>
      <div className="ml-auto flex items-center pr-[19px]">
        <Icon w={12} h={8}><path d="M1 6.500l5-5 5 5" stroke="#222" strokeWidth="1.600" /></Icon>
        <Icon w={12} h={17} className="ml-[20px]"><rect x="3.500" y=".7" width="5" height="10" rx="2.500" stroke="#1c5fb8" strokeWidth="1.300" /><path d="M.8 8a5.200 5.200 0 0010.400 0M6 13v3.500" stroke="#1c5fb8" strokeWidth="1.300" /></Icon>
        <Icon w={13} h={17} className="ml-[20px]"><path d="M.8 16L6.500 1l5.700 15M2.800 11h7.400" stroke="#222" strokeWidth="1.200" /></Icon>
        <Icon w={18} h={18} className="ml-[22px]"><circle cx="9" cy="9" r="8" stroke="#222" strokeWidth="1.200" /><path d="M7 4.500h5V9.500a3 3 0 01-6 0" stroke="#222" strokeWidth="1.200" /></Icon>
        <Icon w={16} h={13} className="ml-[21px]"><path d="M.7 4.700a10.500 10.500 0 0114.600 0" stroke="#c3c3c3" strokeWidth="1.200" /><path d="M3 7.300a7 7 0 0110 0" stroke="#aaa" strokeWidth="1.200" /><path d="M5.300 9.500a4 4 0 015.400 0" stroke="#333" strokeWidth="1.200" /><circle cx="8" cy="11" r="1.500" fill="#222" /></Icon>
        <Icon w={17} h={14} className="ml-[8px]"><path d="M.8 4.800h2.500L7.500 1.300v11.400L3.300 9.200H.8zM9.500 4.700a3.500 3.500 0 010 4.600M11.500 2.700a6 6 0 010 8.600" stroke="#222" strokeWidth="1.200" /><path d="M13.500 1a8.500 8.500 0 010 12" stroke="#c0c0c0" strokeWidth="1.200" /></Icon>
        <div className="ml-[16px] flex flex-col items-end text-[11px] leading-[16px]">
          <Fit className="w-[22px]">7:20</Fit>
          <Fit className="w-[61px]">2025/07/06</Fit>
        </div>
      </div>
    </footer>
  );
}

export default function App() {
  return (
    <div className="flex h-[1080px] w-[1920px] flex-col overflow-hidden bg-[#25282b] font-['Open_Sans','Noto_Sans_CJK_JP',sans-serif]">
      <MenuBar />
      <Toolbar />
      <InfoLine />
      <div className="flex h-[40px] shrink-0 items-center justify-center bg-[#191a1c]">
        <Fit className="ml-[6px] mt-[3px] w-[88px] text-[12px] leading-[18px] text-[#b8b9ba]">選択オブジェクトなし</Fit>
      </div>
      <main className="h-[859px] shrink-0 bg-[#0a0a0a] px-[4px] pb-[4px] pt-[4px]">
        <div className="flex h-[851px] w-[1912px] rounded-[8px] border-2 border-[#5d5e61] bg-[#25292b]">
          <TrackList />
          <Arrange />
          <RightStrip />
        </div>
      </main>
      <Transport />
      <Taskbar />
    </div>
  );
}
